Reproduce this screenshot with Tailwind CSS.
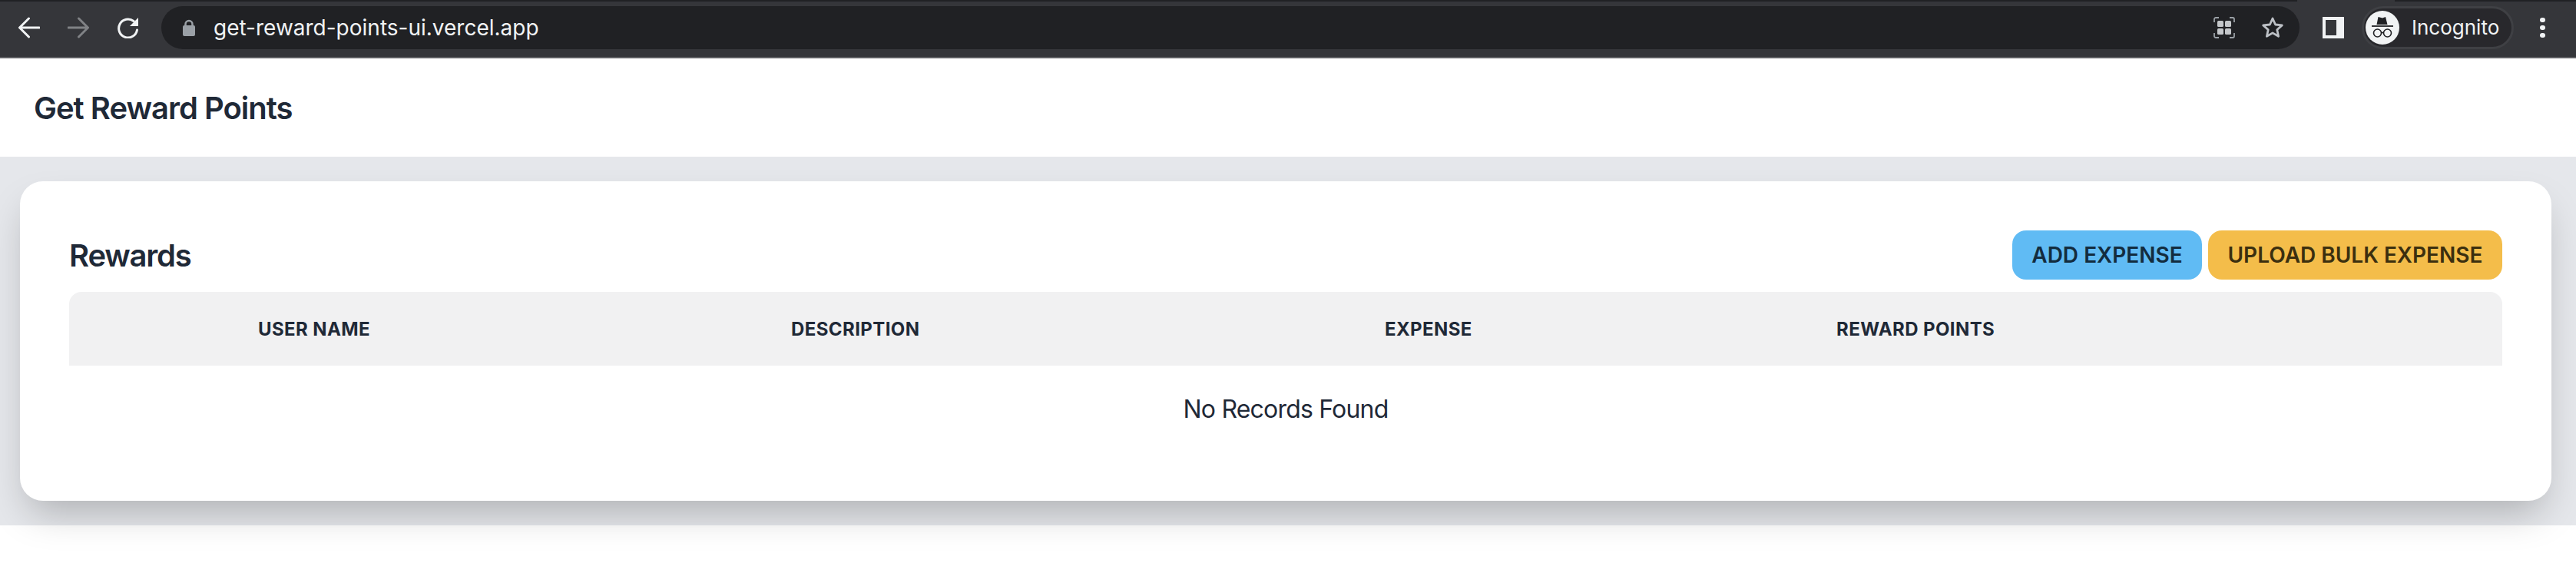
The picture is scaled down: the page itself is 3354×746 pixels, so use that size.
<!DOCTYPE html>
<html lang="en">
<head>
  <meta charset="utf-8">
  <title>Get Reward Points</title>
  <script src="https://cdn.jsdelivr.net/npm/@tailwindcss/browser@4"></script>
</head>
<body class="bg-white font-['Inter',sans-serif] text-[#1f2937] overflow-hidden h-[746px]">
  <!-- browser chrome -->
  <div class="h-[76px] bg-[#35363a] border-b-2 border-[#5f6063] relative">
    <div class="h-[2px] flex">
      <div class="w-[2991px] bg-[#202124]"></div>
      <div class="w-[127px]"></div>
      <div class="flex-1 bg-[#202124]"></div>
    </div>
    <div class="h-[72px] flex items-center pb-[4px]">
      <svg class="ml-[24px]" width="28" height="28" viewBox="0 0 28 28" fill="none" stroke="#f1f3f4" stroke-width="3" stroke-linecap="round" stroke-linejoin="round"><path d="M27 14H2M13.500 2 1.500 14l12 12"/></svg>
      <svg class="ml-[36px]" width="28" height="28" viewBox="0 0 28 28" fill="none" stroke="#808285" stroke-width="3" stroke-linecap="round" stroke-linejoin="round"><path d="M1 14h25M14.500 2l12 12-12 12"/></svg>
      <svg class="ml-[37px]" width="28" height="28" viewBox="0 0 28 28" fill="none"><path d="M21 5.500A12 12 0 1 0 25.500 17" stroke="#f1f3f4" stroke-width="3" stroke-linecap="round"/><path d="M27 1v11H16z" fill="#f1f3f4"/></svg>
      <div class="ml-[29px] w-[2784px] h-[56px] rounded-full bg-[#202124] flex items-center">
        <svg class="ml-[28px]" width="16" height="22" viewBox="0 0 16 22" fill="none"><path d="M3.500 9V6.500a4.500 4.500 0 0 1 9 0V9" stroke="#9aa0a6" stroke-width="2.500"/><rect y="8" width="16" height="14" rx="2" fill="#9aa0a6"/></svg>
        <span class="ml-[24px] text-[28px] text-[#f1f3f4] leading-none">get-reward-points-ui.vercel.app</span>
        <svg class="ml-auto" width="28" height="28" viewBox="0 0 28 28" fill="none"><path d="M1 7V3a2 2 0 0 1 2-2h4M21 1h4a2 2 0 0 1 2 2v4M27 21v4a2 2 0 0 1-2 2h-4M7 27H3a2 2 0 0 1-2-2v-4" stroke="#9aa0a6" stroke-width="1.800"/><rect x="5" y="5" width="8" height="8" rx="1.500" fill="#c4c7ca"/><rect x="15" y="5" width="8" height="8" rx="1.500" fill="#c4c7ca"/><rect x="5" y="15" width="8" height="8" rx="1.500" fill="#c4c7ca"/><rect x="15" y="15" width="8" height="8" rx="1.500" fill="#c4c7ca"/></svg>
        <svg class="ml-[34px] mr-[20px]" width="30" height="30" viewBox="0 0 30 30" fill="none"><path d="m15 3 3.600 8 8.700.9-6.500 5.800 1.800 8.600L15 21.900l-7.600 4.400 1.800-8.600-6.500-5.800 8.700-.9z" stroke="#bdc1c6" stroke-width="2.800" stroke-linejoin="round"/></svg>
      </div>
      <svg class="ml-[30px]" width="28" height="28" viewBox="0 0 28 28"><path fill-rule="evenodd" d="M0 0h28v28H0zM4 4v20h14V4z" fill="#f1f3f4"/></svg>
      <div class="ml-[23px] w-[198px] h-[56px] rounded-full bg-[#28282c] border-[3px] border-[#3f4044] flex items-center">
        <svg class="ml-[2px] shrink-0" width="44" height="44" viewBox="0 0 44 44" fill="none"><circle cx="22" cy="22" r="22" fill="#f1f3f4"/><path d="M16.500 8 22 9.500 26 8l2.500 10h-14z" fill="#202124"/><path d="M8 20h28" stroke="#202124" stroke-width="1.800"/><circle cx="15.500" cy="29" r="5" stroke="#202124" stroke-width="1.600"/><circle cx="28.500" cy="29" r="5" stroke="#202124" stroke-width="1.600"/><path d="M20.500 28.500h3" stroke="#202124" stroke-width="1.600"/></svg>
        <span class="ml-[16px] text-[26px] text-[#f1f3f4] leading-none">Incognito</span>
      </div>
      <div class="ml-[34px] flex flex-col gap-[3.500px]">
        <span class="size-[6.500px] rounded-full bg-[#f1f3f4]"></span>
        <span class="size-[6.500px] rounded-full bg-[#f1f3f4]"></span>
        <span class="size-[6.500px] rounded-full bg-[#f1f3f4]"></span>
      </div>
    </div>
  </div>

  <!-- app header -->
  <header class="h-[128px] pt-[2px] bg-white flex items-center pl-[44px]">
    <h1 class="text-[40px] font-semibold leading-none tracking-[-1px]">Get Reward Points</h1>
  </header>

  <!-- page -->
  <main class="h-[480px] bg-[#e5e7eb] pt-[32px] pl-[26px] pr-[32px]">
    <section class="h-[416px] bg-white rounded-[30px] px-[64px] pt-[64px] shadow-2xl">
      <div class="h-[64px] flex items-center justify-between">
        <h2 class="pt-[2px] text-[40px] font-semibold leading-none tracking-[-1.200px]">Rewards</h2>
        <div class="flex gap-[8px]">
          <button class="h-[64px] w-[247px] rounded-[18px] bg-[#60bbf4] text-[#132c3e] text-[28px] font-semibold">ADD EXPENSE</button>
          <button class="h-[64px] w-[383px] rounded-[18px] bg-[#f4bd4a] text-[#3b2f0f] text-[28px] font-semibold">UPLOAD BULK EXPENSE</button>
        </div>
      </div>
      <div class="mt-[16px] h-[96px] pt-[1px] bg-[#f1f1f2] rounded-t-[16px] pl-[246px] grid grid-cols-[694px_773px_588px_1fr] items-center text-[24px] font-bold tracking-[0.400px]">
        <span>USER NAME</span>
        <span>DESCRIPTION</span>
        <span>EXPENSE</span>
        <span>REWARD POINTS</span>
      </div>
      <p class="h-[114px] flex items-center justify-center text-[32px] tracking-[-0.800px]">No Records Found</p>
    </section>
  </main>
</body>
</html>
